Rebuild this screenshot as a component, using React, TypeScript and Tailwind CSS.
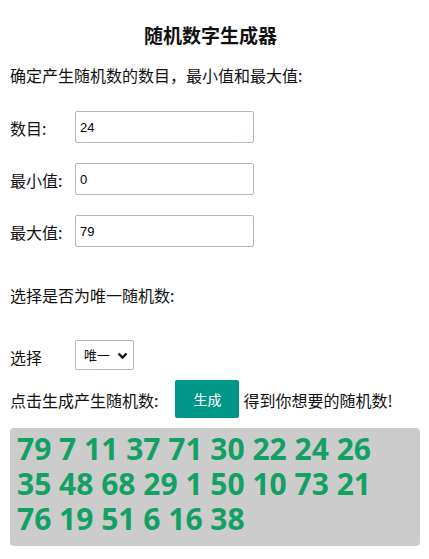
import { useState } from "react";

const nums = [79, 7, 11, 37, 71, 30, 22, 24, 26, 35, 48, 68, 29, 1, 50, 10, 73, 21, 76, 19, 51, 6, 16, 38];

const cjk = "font-['Noto_Sans_CJK_SC','Noto_Sans',sans-serif]";

const Field = ({ label, value }: { label: string; value: string }) => (
  <div className="flex items-center h-[32px]">
    <span className="w-[65px] text-[16px] leading-[24px] mt-[1px]">{label}</span>
    <input
      defaultValue={value}
      className="w-[179px] h-[32px] border border-[#c4b3a8] rounded-[2px] px-[4px] text-[13px] font-['Liberation_Sans',sans-serif] text-black outline-none"
    />
  </div>
);

const App = () => {
  const [unique, setUnique] = useState("1");

  return (
    <main className={`min-h-screen bg-white text-[#111] px-[10px] ${cjk}`}>
      <h3 className="pt-[23px] text-center text-[19px] leading-[24px] font-bold pr-[8px]">随机数字生成器</h3>
      <p className="mt-[16px] text-[16px] leading-[24px]">确定产生随机数的数目，最小值和最大值:</p>

      <div className="mt-[24px] flex flex-col gap-[20px]">
        <Field label="数目:" value="24" />
        <Field label="最小值:" value="0" />
        <Field label="最大值:" value="79" />
      </div>

      <p className="mt-[36px] text-[16px] leading-[24px]">选择是否为唯一随机数:</p>

      <div className="mt-[33px] flex items-center h-[30px]">
        <span className="w-[65px] text-[16px] leading-[24px] mt-[4px]">选择</span>
        <div className="relative w-[59px] h-[30px] border border-[#c4b3a8] rounded-[2px]">
          <select
            value={unique}
            onChange={(e) => setUnique(e.target.value)}
            className="appearance-none w-full h-full pl-[8px] text-[13px] bg-transparent outline-none"
          >
            <option value="1">唯一</option>
            <option value="0">不唯一</option>
          </select>
          <svg className="absolute right-[5px] top-[11px] pointer-events-none" width="11" height="8" viewBox="0 0 11 8">
            <path d="M1.5 1.5 L5.5 5.5 L9.5 1.5" fill="none" stroke="#111" strokeWidth="2.4" />
          </svg>
        </div>
      </div>

      <div className="mt-[10px] flex items-center h-[38px] text-[16px]">
        <span className="mt-[2px]">点击生成产生随机数:</span>
        <button className="ml-[17px] w-[64px] h-[38px] bg-[#009688] text-white text-[14px] rounded-[2px]">生成</button>
        <span className="ml-[4px] mt-[2px]">得到你想要的随机数!</span>
      </div>

      <div className="mt-[10px] mr-[-1px] h-[118px] bg-[#cccccc] rounded-[4px] px-[7px] pt-[3px]">
        <p className="text-[30px] leading-[35px] font-bold text-[#12a064] font-['Open_Sans',sans-serif]">
          {nums.join(" ")}
        </p>
      </div>
    </main>
  );
};

export default App;
